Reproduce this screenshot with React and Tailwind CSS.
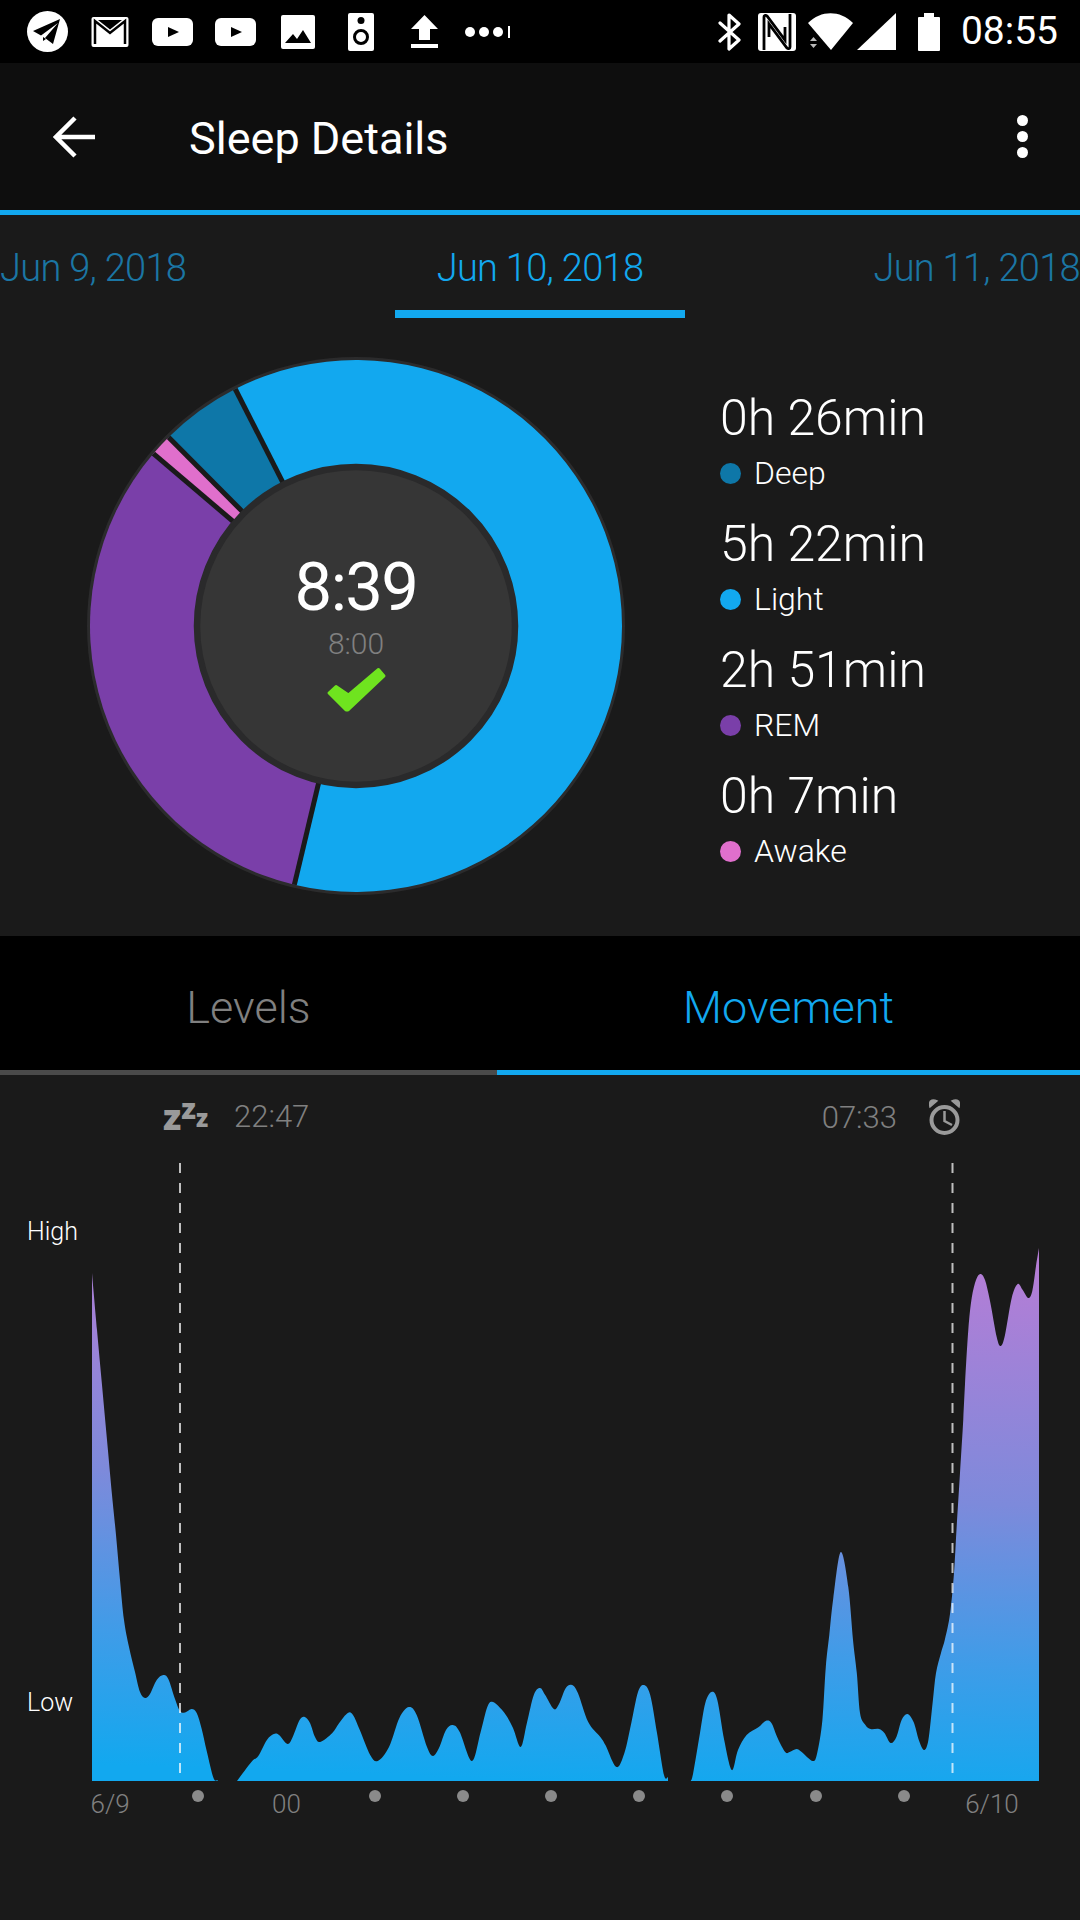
import React from 'react';

const sans = "font-['Roboto',sans-serif]";

const left = [[92,1273],[97,1330],[102,1385],[107,1440],[112,1495],[116,1535],[120,1580],[124,1620],[129,1647],[135,1672],[140,1692],[145,1698],[150,1694],[156.7,1680],[163.3,1675],[168.3,1679],[175,1699],[180,1711],[185,1712.5],[191.7,1709],[196.7,1713],[201.7,1729],[206.7,1751],[213.5,1778],[217.6,1780]];
const mid = [[237,1781],[251.4,1762],[258.3,1756],[266.9,1740],[273.8,1734],[279,1735],[287.5,1744],[292.7,1737],[299.6,1720],[304.8,1717],[310,1723],[315,1737],[320.2,1742],[332.3,1733],[339.2,1723],[347.8,1713],[353,1715],[359.8,1730],[370.2,1755],[377.8,1761],[389,1747],[399.4,1718],[408.8,1707],[416.7,1715],[427,1747],[432.9,1756],[439,1748],[446,1730],[452.8,1725],[459.7,1732],[471.8,1761],[480.4,1733],[487.3,1707],[493,1702],[504.5,1713],[513,1728],[520.7,1747],[526.9,1723],[533.8,1695],[540,1688],[545.2,1695],[553.8,1709],[559,1704],[565.8,1688],[572,1685],[577.9,1693],[588.2,1722],[600.3,1737],[605.4,1745],[616.4,1767],[624.4,1753],[631.3,1723],[638,1692],[644,1685],[650.2,1695],[657,1733],[664,1775],[668,1777]];
const right = [[690.8,1781],[693.2,1773],[700,1733],[705.3,1703],[711.5,1692],[717.3,1700],[724.2,1740],[731.8,1770],[738,1750],[746.6,1735],[758.7,1727],[765.6,1721],[771.4,1723],[777.6,1738],[785.2,1752],[789.7,1752],[796.5,1749],[801.7,1752],[812.7,1761],[817.2,1753],[822.4,1720],[825.8,1667],[829.3,1635],[833.3,1598],[840.7,1552],[848.3,1587],[853,1640],[856.8,1673],[860,1713],[865.4,1725],[870.6,1729],[879,1729],[884.4,1733],[890.6,1743],[896.4,1737],[901.6,1720],[907.4,1714],[913.6,1722],[918.8,1740],[924,1750],[928.4,1740],[932.6,1703],[936,1673],[941,1653],[945,1639],[950,1614],[954,1573],[956.7,1526],[960,1473],[963.3,1419],[965,1384],[968.3,1330],[971.7,1298],[976,1280],[980.3,1274],[985,1280],[990,1301],[996.7,1337],[1000.7,1346],[1005,1335],[1011.7,1298],[1017.7,1284],[1022.7,1290],[1028.3,1298],[1032.3,1291],[1036,1266],[1039,1248]];

// smooth curve through the sampled points, closed down to the baseline
function areaPath(pts) {
  let d = `M${pts[0][0]} 1781L${pts[0][0]} ${pts[0][1]}`;
  for (let i = 0; i < pts.length - 1; i++) {
    const p0 = pts[i - 1] || pts[i];
    const p1 = pts[i];
    const p2 = pts[i + 1];
    const p3 = pts[i + 2] || p2;
    const c1 = [p1[0] + (p2[0] - p0[0]) / 6, p1[1] + (p2[1] - p0[1]) / 6];
    const c2 = [p2[0] - (p3[0] - p1[0]) / 6, p2[1] - (p3[1] - p1[1]) / 6];
    d += `C${c1[0].toFixed(1)} ${c1[1].toFixed(1)} ${c2[0].toFixed(1)} ${c2[1].toFixed(1)} ${p2[0]} ${p2[1]}`;
  }
  return d + `L${pts[pts.length - 1][0]} 1781Z`;
}

function polar(r, deg) {
  const a = (deg * Math.PI) / 180;
  return [269 + r * Math.sin(a), 269 - r * Math.cos(a)];
}

function slice(from, to, color) {
  const span = to > from ? to - from : to + 360 - from;
  const [x1, y1] = polar(266, from);
  const [x2, y2] = polar(266, to);
  return (
    <path
      key={color}
      d={`M269 269L${x1} ${y1}A266 266 0 ${span > 180 ? 1 : 0} 1 ${x2} ${y2}Z`}
      fill={color}
    />
  );
}

function Separator({ deg }) {
  const [x, y] = polar(266, deg);
  return <line x1="269" y1="269" x2={x} y2={y} stroke="#1a1a1a" strokeWidth="5" />;
}

function Donut() {
  return (
    <div className="relative w-[538px] h-[538px]">
      <svg width="538" height="538" viewBox="0 0 538 538" className="block">
        <circle cx="269" cy="269" r="269" fill="#2b2b2c" />
        {slice(333, 193.4, '#12a8ef')}
        {slice(193.4, 310.4, '#7a3fa9')}
        {slice(310.4, 315.2, '#e06fcc')}
        {slice(315.2, 333, '#0e77a8')}
        <Separator deg={333} />
        <Separator deg={193.4} />
        <Separator deg={310.4} />
        <Separator deg={315.2} />
        <circle cx="269" cy="269" r="159" fill="#363636" stroke="#2a2a2b" strokeWidth="6.5" />
      </svg>
      <div className={`absolute inset-0 flex flex-col items-center pt-[190px] ${sans}`}>
        <div className="text-[67px] leading-[80px] tracking-[-1.6px] text-white">8:39</div>
        <div className="text-[30px] leading-[36px] font-light text-[#808080] mt-[-1px]">8:00</div>
        <svg width="61" height="48" viewBox="0 0 61 48" className="mt-[4px]">
          <polygon points="52.5,3.5 58,10 22,44 20,44 3,27 10,20.5 22.5,29" fill="#6fe41f" stroke="#6fe41f" strokeWidth="3" strokeLinejoin="round" />
        </svg>
      </div>
    </div>
  );
}

function LegendItem({ time, label, color }) {
  return (
    <div className={`${sans} h-[126px]`}>
      <div className="text-[50px] leading-[56px] font-light text-white">{time}</div>
      <div className="flex items-center gap-[13px] mt-[10px]">
        <span className={`w-[21px] h-[21px] rounded-full ${color}`} />
        <span className="text-[32px] leading-[34px] font-light text-white">{label}</span>
      </div>
    </div>
  );
}

function StatusBar() {
  return (
    <div className="h-[63px] bg-black flex items-center justify-between pl-[27px] pr-[22px] text-white">
      <div className="flex items-center">
        <svg width="41" height="41" viewBox="0 0 41 41">
          <circle cx="20.5" cy="20.5" r="20.5" fill="#fff" />
          <path d="M33 8L6 20L14 24.5L31 12L18 27L26 33Z" fill="#000" />
          <path d="M16 26L16 30L19 28Z" fill="#000" />
        </svg>
        <svg width="38" height="30" viewBox="0 0 38 30" className="ml-[23px]">
          <rect x="0.5" y="0" width="37" height="30" rx="2" fill="#fff" />
          <path d="M4 27V4L19 16L34 4V27" fill="none" stroke="#000" strokeWidth="2.5" />
          <path d="M4 3H7L19 12.5L31 3H34" fill="#000" />
        </svg>
        <svg width="41" height="28" viewBox="0 0 41 28" className="ml-[23px]">
          <rect width="41" height="28" rx="6" fill="#fff" />
          <path d="M16 9V19L27 14Z" fill="#000" />
        </svg>
        <svg width="41" height="28" viewBox="0 0 41 28" className="ml-[22px]">
          <rect width="41" height="28" rx="6" fill="#fff" />
          <path d="M16 9V19L27 14Z" fill="#000" />
        </svg>
        <svg width="34" height="34" viewBox="0 0 34 34" className="ml-[25px]">
          <rect width="34" height="34" rx="2" fill="#fff" />
          <path d="M4 28L12 19L16 24L22 15L30 28Z" fill="#000" />
        </svg>
        <svg width="26" height="38" viewBox="0 0 26 38" className="ml-[33px]">
          <rect width="26" height="38" rx="2" fill="#fff" />
          <circle cx="13" cy="7.5" r="3.5" fill="#000" />
          <circle cx="13" cy="24" r="6.5" fill="none" stroke="#000" strokeWidth="3" />
        </svg>
        <svg width="27" height="33" viewBox="0 0 27 33" className="ml-[37px]">
          <path d="M13.5 0L27 14H19V25H8V14H0Z" fill="#fff" />
          <rect y="29" width="27" height="4" fill="#fff" />
        </svg>
        <svg width="45" height="12" viewBox="0 0 45 12" className="ml-[27px]">
          <circle cx="5" cy="6" r="5" fill="#fff" />
          <circle cx="19" cy="6" r="5" fill="#fff" />
          <circle cx="33" cy="6" r="5" fill="#fff" />
          <rect x="43" y="0" width="2" height="12" fill="#fff" />
        </svg>
      </div>
      <div className="flex items-center">
        <svg width="24" height="38" viewBox="0 0 24 38">
          <path d="M2 10L21 27L11 36V2L21 11L2 28" fill="none" stroke="#fff" strokeWidth="3.2" strokeLinecap="round" strokeLinejoin="round" />
        </svg>
        <svg width="38" height="38" viewBox="0 0 38 38" className="ml-[16px]">
          <rect width="38" height="38" rx="3" fill="#fff" />
          <path d="M6 37V4C6 2 8 2 9 3L27 27V14" fill="none" stroke="#000" strokeWidth="2.8" />
          <path d="M32 1V34C32 36 30 36 29 35L11 11V24" fill="none" stroke="#000" strokeWidth="2.8" />
        </svg>
        <svg width="45" height="37" viewBox="0 0 45 37" className="ml-[12px]">
          <path d="M0 10C13 -3 32 -3 45 10L23 37Z" fill="#fff" />
          <path d="M2 28L5.500 24L9 28Z M2 31H9L5.500 35Z" fill="#bbb" />
        </svg>
        <svg width="39" height="37" viewBox="0 0 39 37" className="ml-[4px]">
          <path d="M39 0V37H0Z" fill="#fff" />
        </svg>
        <svg width="22" height="38" viewBox="0 0 22 38" className="ml-[22px]">
          <path d="M6 0H16V4H21Q22 4 22 5V37Q22 38 21 38H1Q0 38 0 37V5Q0 4 1 4H6Z" fill="#fff" />
        </svg>
        <span className={`${sans} text-[39px] leading-none ml-[21px]`}>08:55</span>
      </div>
    </div>
  );
}

function Toolbar() {
  return (
    <div className="h-[147px] bg-[#0e0e0e] flex items-center pl-[53px] pr-[52px] text-white">
      <svg width="42" height="42" viewBox="0 0 42 42" className="shrink-0">
        <path d="M42 21H3M22 2L3 21L22 40" fill="none" stroke="#fff" strokeWidth="4.500" />
      </svg>
      <div className={`${sans} text-[45px] ml-[94px] mt-[5px] flex-1`}>Sleep Details</div>
      <div className="flex flex-col gap-[5px]">
        <span className="w-[11px] h-[11px] rounded-full bg-white" />
        <span className="w-[11px] h-[11px] rounded-full bg-white" />
        <span className="w-[11px] h-[11px] rounded-full bg-white" />
      </div>
    </div>
  );
}

function DateTabs() {
  return (
    <div className={`${sans} relative h-[103px] grid grid-cols-3 text-[38px] leading-[42px] font-light tracking-[-0.7px] text-[#1b76a4] pt-[32px]`}>
      <span className="whitespace-nowrap">Jun 9, 2018</span>
      <span className="text-center whitespace-nowrap text-[#12a8ef]">Jun 10, 2018</span>
      <span className="text-right whitespace-nowrap">Jun 11, 2018</span>
      <div className="absolute left-[395px] bottom-0 w-[290px] h-[8px] bg-[#12a8ef]" />
    </div>
  );
}

export default function App() {
  const ticks = ['6/9', null, '00', null, null, null, null, null, null, null, '6/10'];
  return (
    <div className={`${sans} w-[1080px] h-[1920px] bg-[#1a1a1a] overflow-hidden`}>
      <StatusBar />
      <Toolbar />
      <div className="h-[5px] bg-[#12a8ef]" />
      <DateTabs />

      <div className="h-[618px] flex items-start pt-[39px] pl-[87px]">
        <Donut />
        <div className="ml-[95px] pt-[33px]">
          <LegendItem time="0h 26min" label="Deep" color="bg-[#0e77a8]" />
          <LegendItem time="5h 22min" label="Light" color="bg-[#12a8ef]" />
          <LegendItem time="2h 51min" label="REM" color="bg-[#7a3fa9]" />
          <LegendItem time="0h 7min" label="Awake" color="bg-[#e06fcc]" />
        </div>
      </div>

      <div className="h-[134px] bg-black flex text-[45px] font-light pt-[9px]">
        <div className="w-[497px] flex items-center justify-center text-[#808080]">Levels</div>
        <div className="flex-1 flex items-center justify-center text-[#12a8ef]">Movement</div>
      </div>
      <div className="h-[5px] flex">
        <div className="w-[497px] bg-[#4a4a4a]" />
        <div className="flex-1 bg-[#12a8ef]" />
      </div>

      <div className="h-[85px] flex items-start justify-between pl-[163px] pr-[120px] pt-[24px] text-[31px] leading-[36px] font-light text-[#808080]">
        <div className="flex items-center">
          <div className="w-[46px] h-[36px] flex items-end font-['Open_Sans',sans-serif] font-extrabold text-[#9a9a9a] leading-none">
            <span className="text-[36px]">z</span>
            <span className="text-[29px] -translate-y-[13px]">z</span>
            <span className="text-[24px] -translate-y-[5px]">z</span>
          </div>
          <span className="ml-[25px]">22:47</span>
        </div>
        <div className="flex items-center">
          <span>07:33</span>
          <svg width="31" height="37" viewBox="0 0 31 37" className="ml-[32px]">
            <circle cx="15.500" cy="21" r="13" fill="none" stroke="#9a9a9a" strokeWidth="4" />
            <path d="M15.500 12V22L23 26" fill="none" stroke="#9a9a9a" strokeWidth="2.500" />
            <path d="M1 8L8 2Q4 0 1.500 2Q0 4 1 8ZM30 8L23 2Q27 0 29.500 2Q31 4 30 8Z" fill="#9a9a9a" stroke="#9a9a9a" strokeWidth="1.500" />
          </svg>
        </div>
      </div>

      <div className="relative h-[621px]">
        <svg width="1080" height="621" viewBox="0 1160 1080 621" className="block">
          <defs>
            <linearGradient id="movement" gradientUnits="userSpaceOnUse" x1="560" y1="1248" x2="540" y2="1781">
              <stop offset="0" stopColor="#b57dd6" />
              <stop offset="0.45" stopColor="#7d8adb" />
              <stop offset="0.75" stopColor="#3f9ce8" />
              <stop offset="1" stopColor="#12a8ef" />
            </linearGradient>
          </defs>
          <path d={areaPath(left)} fill="url(#movement)" />
          <path d={areaPath(mid)} fill="url(#movement)" />
          <path d={areaPath(right)} fill="url(#movement)" />
          <line x1="180" y1="1163" x2="180" y2="1775" stroke="#ffffff" strokeOpacity="0.72" strokeWidth="2" strokeDasharray="10 10" />
          <line x1="952.500" y1="1163" x2="952.500" y2="1775" stroke="#ffffff" strokeOpacity="0.72" strokeWidth="2" strokeDasharray="10 10" />
        </svg>
        <span className="absolute left-[27px] top-[54px] text-[25px] leading-[36px] font-light text-white">High</span>
        <span className="absolute left-[27px] top-[525px] text-[25px] leading-[36px] font-light text-white">Low</span>
      </div>

      <div className="flex pl-[66px] pt-[9px]">
        {ticks.map((t, i) => (
          <div key={i} className="w-[88.2px] flex justify-center">
            {t ? (
              <span className="text-[26px] leading-[30px] font-light text-[#808080] mt-[-1px]">{t}</span>
            ) : (
              <span className="w-3 h-3 rounded-full bg-[#8a8a8a]" />
            )}
          </div>
        ))}
      </div>
    </div>
  );
}
